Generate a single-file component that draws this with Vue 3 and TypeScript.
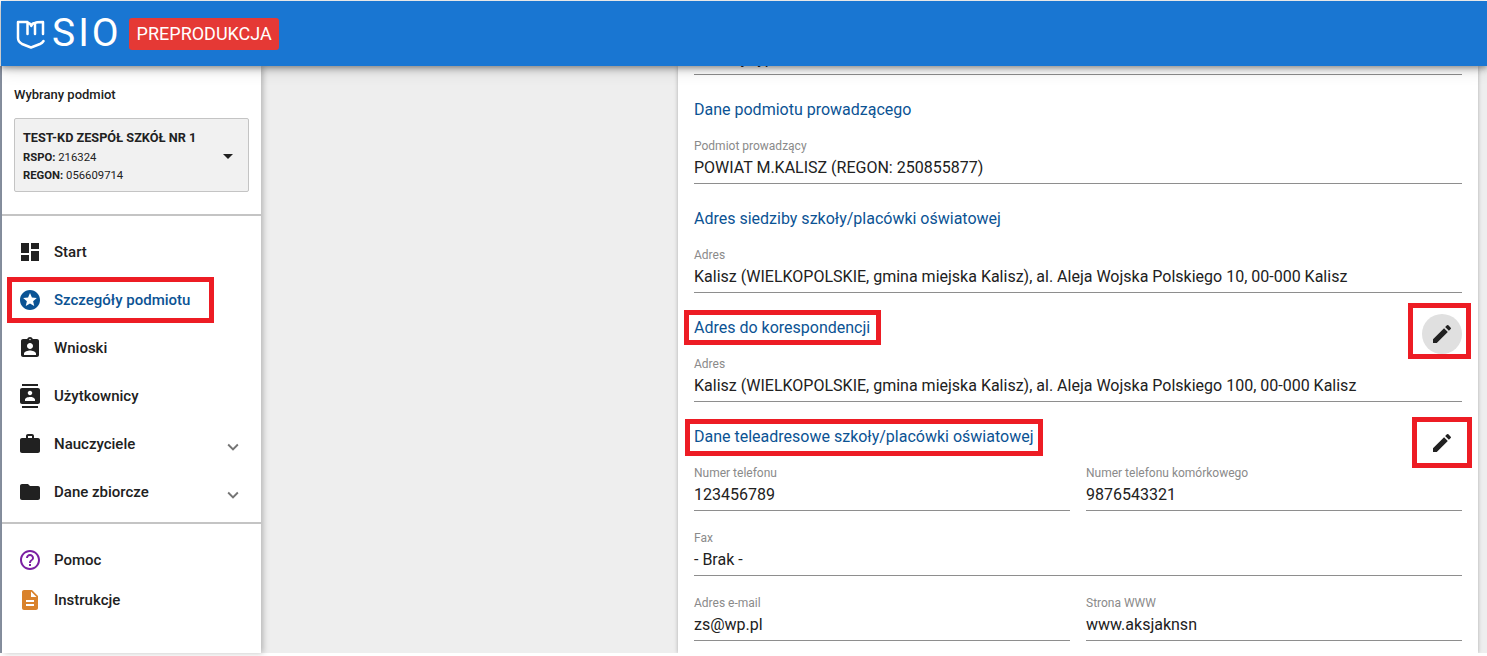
<script setup lang="ts">
interface NavItem {
  label: string
  icon: string
  color?: string
  active?: boolean
  chevron?: boolean
}

const mainNav: NavItem[] = [
  { label: 'Start', icon: 'M3 13h8V3H3v10zm0 8h8v-6H3v6zm10 0h8V11h-8v10zm0-18v6h8V3h-8z' },
  {
    label: 'Szczegóły podmiotu',
    icon: 'M11.99 2C6.47 2 2 6.48 2 12s4.47 10 9.99 10C17.52 22 22 17.52 22 12S17.52 2 11.99 2zm4.24 16L12 15.45 7.77 18l1.12-4.81-3.73-3.23 4.92-.42L12 5l1.92 4.53 4.92.42-3.73 3.23L16.23 18z',
    color: '#0b5394',
    active: true,
  },
  {
    label: 'Wnioski',
    icon: 'M19 3h-4.18C14.4 1.84 13.3 1 12 1s-2.4.84-2.82 2H5c-1.1 0-2 .9-2 2v14c0 1.1.9 2 2 2h14c1.1 0 2-.9 2-2V5c0-1.1-.9-2-2-2zm-7-.25c.41 0 .75.34.75.75s-.34.75-.75.75-.75-.34-.75-.75.34-.75.75-.75zM12 7c1.66 0 3 1.34 3 3s-1.34 3-3 3-3-1.34-3-3 1.34-3 3-3zm6 12H6v-1.4c0-2 4-3.1 6-3.1s6 1.1 6 3.1V19z',
  },
  {
    label: 'Użytkownicy',
    icon: 'M20 0H4v2h16V0zM4 24h16v-2H4v2zM20 4H4c-1.1 0-2 .9-2 2v12c0 1.1.9 2 2 2h16c1.1 0 2-.9 2-2V6c0-1.1-.9-2-2-2zm-8 2.75c1.24 0 2.25 1.01 2.25 2.25s-1.01 2.25-2.25 2.25S9.75 10.24 9.75 9 10.76 6.75 12 6.75zM17 17H7v-1.5c0-1.67 3.33-2.5 5-2.5s5 .83 5 2.5V17z',
  },
  {
    label: 'Nauczyciele',
    icon: 'M20 6h-4V4c0-1.11-.89-2-2-2h-4c-1.11 0-2 .89-2 2v2H4c-1.11 0-1.99.89-1.99 2L2 19c0 1.11.89 2 2 2h16c1.11 0 2-.89 2-2V8c0-1.11-.89-2-2-2zm-6 0h-4V4h4v2z',
    chevron: true,
  },
  {
    label: 'Dane zbiorcze',
    icon: 'M10 4H4c-1.1 0-1.99.9-1.99 2L2 18c0 1.1.9 2 2 2h16c1.1 0 2-.9 2-2V8c0-1.1-.9-2-2-2h-8l-2-2z',
    chevron: true,
  },
]

const helpNav: NavItem[] = [
  {
    label: 'Pomoc',
    icon: 'M11 18h2v-2h-2v2zm1-16C6.48 2 2 6.48 2 12s4.48 10 10 10 10-4.48 10-10S17.52 2 12 2zm0 18c-4.41 0-8-3.59-8-8s3.59-8 8-8 8 3.59 8 8-3.59 8-8 8zm0-14c-2.21 0-4 1.79-4 4h2c0-1.1.9-2 2-2s2 .9 2 2c0 2-3 1.75-3 5h2c0-2.25 3-2.5 3-5 0-2.21-1.79-4-4-4z',
    color: '#7b1fa2',
  },
  {
    label: 'Instrukcje',
    icon: 'M14 2H6c-1.1 0-1.99.9-1.99 2L4 20c0 1.1.89 2 1.99 2H18c1.1 0 2-.9 2-2V8l-6-6zm2 16H8v-2h8v2zm0-4H8v-2h8v2zm-3-5V3.5L18.5 9H13z',
    color: '#d9822b',
  },
]

const pencil = 'M3 17.25V21h3.75L17.81 9.94l-3.75-3.75L3 17.25zM20.71 7.04a1 1 0 0 0 0-1.41l-2.34-2.34a1 1 0 0 0-1.41 0l-1.83 1.83 3.75 3.75 1.83-1.83z'
</script>

<template>
  <div class="page">
    <header class="topbar">
      <svg class="logo" viewBox="16 18 29 30" aria-hidden="true">
        <path d="M18 21H27.5V33M27.5 22C29.5 22 30.8 23 31.3 25C31.8 23 33 22 35 22V33M35 22C36 21 38 21 43 21V33M18 21V37C18 40 19.5 41.5 22 43L31 46.5L40 43C41.5 42.3 42.8 41.2 43.5 40" fill="none" stroke="#fff" stroke-width="2.5" stroke-linejoin="round" stroke-linecap="round" />
      </svg>
      <span class="brand">SIO</span>
      <span class="badge">PREPRODUKCJA</span>
    </header>

    <div class="body">
      <aside class="sidebar">
        <div class="subject">
          <div class="subject-title">Wybrany podmiot</div>
          <div class="select">
            <div>
              <div class="select-name">TEST-KD ZESPÓŁ SZKÓŁ NR 1</div>
              <div class="select-line"><b>RSPO:</b> 216324</div>
              <div class="select-line"><b>REGON:</b> 056609714</div>
            </div>
            <span class="caret"></span>
          </div>
        </div>
        <nav class="nav nav-main">
          <div v-for="item in mainNav" :key="item.label" class="nav-item" :class="{ active: item.active }">
            <span v-if="item.active" class="mark mark-nav"></span>
            <svg class="nav-icon" viewBox="0 0 24 24" :style="{ color: item.color }" aria-hidden="true">
              <path :d="item.icon" fill="currentColor" />
            </svg>
            <span class="nav-label">{{ item.label }}</span>
            <svg v-if="item.chevron" class="chevron" viewBox="0 0 24 24" aria-hidden="true">
              <path d="M7.41 8.59 12 13.17l4.59-4.58L18 10l-6 6-6-6z" fill="currentColor" />
            </svg>
          </div>
        </nav>
        <nav class="nav nav-help">
          <div v-for="item in helpNav" :key="item.label" class="nav-item small">
            <svg class="nav-icon" viewBox="0 0 24 24" :style="{ color: item.color }" aria-hidden="true">
              <path :d="item.icon" fill="currentColor" />
            </svg>
            <span class="nav-label">{{ item.label }}</span>
          </div>
        </nav>
      </aside>

      <main class="main">
        <section class="card">
          <div class="clipped"><span>Gminny typ</span></div>

          <h2 class="heading h1">Dane podmiotu prowadzącego</h2>
          <div class="field f1">
            <label>Podmiot prowadzący</label>
            <div class="value">POWIAT M.KALISZ (REGON: 250855877)</div>
          </div>

          <h2 class="heading h1">Adres siedziby szkoły/placówki oświatowej</h2>
          <div class="field f1">
            <label>Adres</label>
            <div class="value">Kalisz (WIELKOPOLSKIE, gmina miejska Kalisz), al. Aleja Wojska Polskiego 10, 00-000 Kalisz</div>
          </div>

          <div class="heading-row">
            <h2 class="heading"><span class="mark mark-a"></span>Adres do korespondencji</h2>
            <button class="icon-btn hover" type="button" aria-label="Edytuj">
              <span class="mark mark-b"></span>
              <svg viewBox="0 0 24 24" aria-hidden="true"><path :d="pencil" fill="currentColor" /></svg>
            </button>
          </div>
          <div class="field f2">
            <label>Adres</label>
            <div class="value">Kalisz (WIELKOPOLSKIE, gmina miejska Kalisz), al. Aleja Wojska Polskiego 100, 00-000 Kalisz</div>
          </div>

          <div class="heading-row">
            <h2 class="heading"><span class="mark mark-c"></span>Dane teleadresowe szkoły/placówki oświatowej</h2>
            <button class="icon-btn" type="button" aria-label="Edytuj">
              <span class="mark mark-d"></span>
              <svg viewBox="0 0 24 24" aria-hidden="true"><path :d="pencil" fill="currentColor" /></svg>
            </button>
          </div>
          <div class="grid">
            <div class="field">
              <label>Numer telefonu</label>
              <div class="value">123456789</div>
            </div>
            <div class="field">
              <label>Numer telefonu komórkowego</label>
              <div class="value">9876543321</div>
            </div>
            <div class="field wide">
              <label>Fax</label>
              <div class="value">- Brak -</div>
            </div>
            <div class="field">
              <label>Adres e-mail</label>
              <div class="value">zs@wp.pl</div>
            </div>
            <div class="field">
              <label>Strona WWW</label>
              <div class="value">www.aksjaknsn</div>
            </div>
          </div>
        </section>
      </main>
    </div>
    <div class="foot"></div>
  </div>
</template>

<style>
html,
body {
  margin: 0;
  background: #fff;
  overflow: hidden;
}
</style>

<style scoped>
.page {
  width: 1487px;
  height: 656px;
  overflow: hidden;
  display: flex;
  flex-direction: column;
  font-family: Roboto, "Liberation Sans", sans-serif;
  color: #212121;
  background: #fff;
  box-sizing: border-box;
  padding-top: 1px;
}
.topbar {
  height: 65px;
  flex: none;
  margin-left: 1px;
  background: #1976d2;
  display: flex;
  align-items: center;
  padding: 0 0 0 15px;
  position: relative;
  z-index: 3;
  box-shadow: 0 2px 4px -1px rgba(0, 0, 0, 0.2), 0 4px 5px rgba(0, 0, 0, 0.14), 0 1px 10px rgba(0, 0, 0, 0.12), 0 4px 16px rgba(0, 0, 0, 0.12);
}
.logo {
  width: 29px;
  height: 30px;
  flex: none;
}
.brand {
  font-size: 39px;
  font-weight: 400;
  color: #fff;
  margin-left: 7px;
  letter-spacing: 3px;
  line-height: 1;
}
.badge {
  margin-left: 7.5px;
  height: 32px;
  padding: 0 7.5px;
  display: flex;
  align-items: center;
  background: #e53935;
  border-radius: 3px;
  color: #fff;
  font-size: 18px;
}
.body {
  flex: 1;
  min-height: 0;
  display: flex;
  background: #eee;
  border-left: 2px solid #8a93a3;
}
.foot {
  height: 3px;
  flex: none;
  background: #fff;
}
.sidebar {
  width: 259px;
  flex: none;
  background: #fff;
  position: relative;
  z-index: 2;
  box-shadow: 2px 0 6px rgba(0, 0, 0, 0.25);
}
.subject {
  height: 150px;
  padding: 21px 12px 0;
  box-sizing: border-box;
  border-bottom: 2px solid #c4c4c4;
}
.subject-title {
  font-size: 13px;
  font-weight: 500;
  line-height: 16px;
}
.select {
  margin-top: 15px;
  width: 235px;
  height: 74px;
  box-sizing: border-box;
  border: 1px solid #c4c4c4;
  border-radius: 2px;
  background: #f1f1f1;
  padding: 9px 8px 7px;
  display: flex;
  align-items: center;
  justify-content: space-between;
}
.select-name {
  font-size: 12.7px;
  font-weight: 700;
  line-height: 22px;
}
.select-line {
  font-size: 11.3px;
  line-height: 18px;
}
.select-line b {
  font-weight: 700;
}
.caret {
  width: 0;
  height: 0;
  border-left: 5px solid transparent;
  border-right: 5px solid transparent;
  border-top: 5px solid #212121;
  margin-right: 7px;
}
.nav-main {
  padding-top: 12px;
  height: 308px;
  box-sizing: border-box;
  border-bottom: 2px solid #c4c4c4;
}
.nav-help {
  padding-top: 16px;
}
.nav-item {
  height: 48px;
  display: flex;
  align-items: center;
  padding: 0 17px 0 16px;
  position: relative;
  font-size: 15px;
  font-weight: 500;
}
.nav-item.small {
  height: 40px;
}
.nav-item.active {
  color: #0b5394;
}
.nav-icon {
  width: 24px;
  height: 24px;
  flex: none;
}
.nav-label {
  margin-left: 12px;
  flex: 1;
}
.chevron {
  width: 22px;
  height: 22px;
  color: #757575;
  flex: none;
  margin-top: 6px;
}
.main {
  flex: 1;
  min-width: 0;
  padding: 0 9px 0 417px;
  overflow: hidden;
}
.card {
  background: #fff;
  height: 100%;
  padding: 0 16px;
  box-sizing: border-box;
  overflow: hidden;
  box-shadow: 0 0 4px rgba(0, 0, 0, 0.28);
}
.clipped {
  height: 8px;
  border-bottom: 1px solid #8e8e8e;
  overflow: hidden;
  font-size: 16px;
  line-height: 16px;
}
.clipped span {
  display: block;
  margin-top: -15px;
}
.heading {
  margin: 0;
  font-size: 16px;
  font-weight: 400;
  line-height: 20px;
  color: #0b5394;
  position: relative;
}
.h1 {
  margin-top: 24px;
  line-height: 22px;
}
.heading-row {
  display: flex;
  justify-content: space-between;
  align-items: center;
  height: 40px;
  box-sizing: border-box;
  padding-top: 2px;
  margin-top: 14px;
}
.field {
  min-width: 0;
  height: 45px;
  border-bottom: 1px solid #8e8e8e;
}
.f1 {
  margin-top: 17px;
}
.f2 {
  margin-top: 9px;
}
.field label {
  display: block;
  font-size: 12px;
  line-height: 16px;
  color: #8a8a8a;
}
.value {
  font-size: 16px;
  line-height: 22px;
  margin-top: 3px;
  white-space: nowrap;
}
.grid {
  display: grid;
  grid-template-columns: 376px 376px;
  column-gap: 16px;
  row-gap: 19px;
  margin-top: 9px;
}
.wide {
  grid-column: 1 / -1;
}
.icon-btn {
  width: 40px;
  height: 40px;
  padding: 0;
  border: 0;
  border-radius: 50%;
  background: transparent;
  color: #212121;
  display: flex;
  align-items: center;
  justify-content: center;
  position: relative;
  margin-top: 12px;
}
.icon-btn.hover {
  background: #e0e0e0;
}
.icon-btn svg {
  width: 24px;
  height: 24px;
}
.mark {
  position: absolute;
  border: 5px solid #ed1c24;
  box-sizing: border-box;
  pointer-events: none;
}
.mark-nav {
  left: 5px;
  top: 1px;
  width: 207px;
  height: 46px;
}
.mark-a {
  left: -10px;
  top: -8px;
  width: 197px;
  height: 35px;
}
.mark-b {
  left: -14px;
  top: -11px;
  width: 63px;
  height: 56px;
}
.mark-c {
  left: -9px;
  top: -8px;
  width: 358px;
  height: 37px;
}
.mark-d {
  left: -10px;
  top: -6px;
  width: 60px;
  height: 51px;
}
</style>
